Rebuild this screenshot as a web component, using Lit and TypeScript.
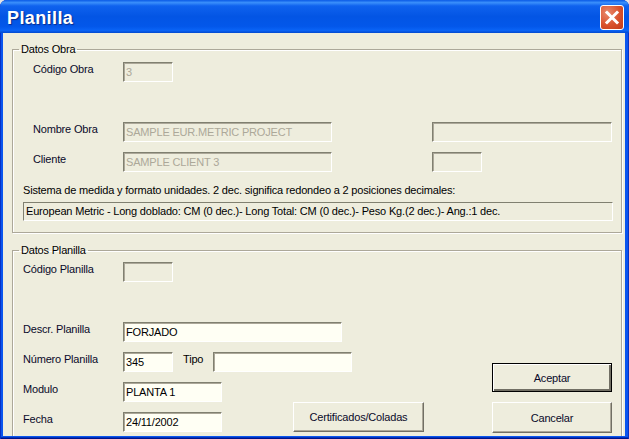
import { LitElement, html, css } from "lit";
import { customElement } from "lit/decorators.js";

@customElement("app-root")
export class AppRoot extends LitElement {
  static styles = css`
    :host { display: block; width: 629px; height: 439px; overflow: hidden; background: #e4e4e4;
      font-family: "Liberation Sans", Arial, sans-serif; font-size: 11px; letter-spacing: -0.18px; color: #000; }
    .window { display: flex; flex-direction: column; width: 629px; height: 439px; box-sizing: border-box;
      border-radius: 7px 7px 0 0; overflow: hidden;
      background: #0a55ee;
      box-shadow: inset 1px 0 0 #0831c4, inset -1px 0 0 #0831c4, inset 0 -1px 0 #00138c, inset 0 -2px 0 #0033bb; }
    .title { flex: none; height: 33px; box-sizing: border-box; padding: 2px 5px 0 7px; display: flex; align-items: center; justify-content: space-between;
      background: linear-gradient(180deg, #0a5ae6 0%, #3a8ffb 8%, #0f62ee 18%, #0355e4 50%, #0357ea 80%, #0a64f6 92%, #0249cf 100%); }
    .title-text { font-family: "Liberation Sans", sans-serif; font-weight: bold; font-size: 18px; letter-spacing: 0.4px; color: #fff;
      text-shadow: 1px 1px 1px #0a2c8c; margin-top: 2px; }
    .close { width: 24px; height: 25px; box-sizing: border-box; border: 1px solid #fff; border-radius: 3px; display: block;
      background: radial-gradient(circle at 30% 30%, #e88a6e, #d9512c 55%, #c23a18); }
    .client { flex: 1; min-height: 0; margin: 0 4px 3px 3px; background: #eeeddd; overflow: hidden; }
    fieldset { margin: 0; min-width: 0; border: 1px solid #aca899; box-shadow: 1px 1px 0 #fff, inset 1px 1px 0 #fff; padding: 0 0 0 10px; }
    legend { padding: 0 2px; margin-left: -4px; height: 14px; line-height: 14px; color: #000; }
    .g1 { margin: 9px 3px 0 9px; height: 191px; box-sizing: border-box; padding-top: 6px; }
    .g2 { margin: 10px 3px 0 9px; height: 210px; box-sizing: border-box; padding-top: 5px; }
    .row { display: flex; align-items: flex-start; height: 20px; }
    .gap40 { margin-top: 40px; }
    .gap10 { margin-top: 10px; }
    .label { width: 100px; flex: none; line-height: 14px; box-sizing: border-box; color: #0a0a2a; }
    .ind { padding-left: 10px; }
    .field { box-sizing: border-box; height: 20px; flex: none; padding: 0 2px; line-height: 19px; white-space: nowrap; overflow: hidden;
      border: 1px solid; border-color: #808070 #fff #fff #808070; box-shadow: inset 1px 1px 0 #aca899; }
    .off { background: #eeeddd; color: #aca899; }
    .on { background: #fffff4; color: #000; }
    .w50 { width: 50px; } .w99 { width: 99px; } .w209 { width: 209px; } .w219 { width: 219px; } .w180 { width: 180px; } .w139 { width: 139px; }
    .ml100 { margin-left: 100px; }
    .note { margin-top: 11px; height: 19px; line-height: 14px; }
    .box { width: 590px; height: 19px; box-sizing: border-box; padding: 0 2px; line-height: 17px; white-space: nowrap; overflow: hidden;
      border: 1px solid; border-color: #808070 #fff #fff #808070; }
    .tipo { margin-left: 10px; width: 30px; flex: none; line-height: 14px; }
    .lower { display: flex; }
    .left { width: 270px; flex: none; }
    .mid { width: 131px; flex: none; padding-top: 140px; }
    .right { width: 120px; flex: none; margin-left: 68px; padding-top: 101px; display: flex; flex-direction: column; gap: 10px; }
    .btn { box-sizing: border-box; display: flex; align-items: center; justify-content: center; color: #0a0a2a; background: #eeeddd;
      border: 1px solid; border-color: #fff #716f64 #716f64 #fff; box-shadow: inset -1px -1px 0 #aca899; }
    .b1 { height: 30px; }
    .b2 { height: 29px; border: 1px solid #000; box-shadow: inset 1px 1px 0 #fff, inset -2px -2px 0 #716f64; }
    .b3 { height: 31px; }
  `;

  render() {
    return html`
      <div class="window">
        <div class="title">
          <span class="title-text">Planilla</span>
          <svg class="close" viewBox="0 0 22 23">
            <path d="M6 6.5 L16 16.5 M16 6.5 L6 16.5" stroke="#fff" stroke-width="3" stroke-linecap="square" fill="none"/>
          </svg>
        </div>
        <div class="client">
          <fieldset class="g1">
            <legend>Datos Obra</legend>
            <div class="row">
              <div class="label ind">Código Obra</div>
              <div class="field off w50">3</div>
            </div>
            <div class="row gap40">
              <div class="label ind">Nombre Obra</div>
              <div class="field off w209">SAMPLE EUR.METRIC PROJECT</div>
              <div class="field off w180 ml100"></div>
            </div>
            <div class="row gap10">
              <div class="label ind">Cliente</div>
              <div class="field off w209">SAMPLE CLIENT 3</div>
              <div class="field off w50 ml100"></div>
            </div>
            <div class="note">Sistema de medida y formato unidades. 2 dec. significa redondeo a 2 posiciones decimales:</div>
            <div class="box">European Metric - Long doblado: CM (0 dec.)- Long Total: CM (0 dec.)- Peso Kg.(2 dec.)- Ang.:1 dec.</div>
          </fieldset>
          <fieldset class="g2">
            <legend>Datos Planilla</legend>
            <div class="lower">
              <div class="left">
                <div class="row">
                  <div class="label">Código Planilla</div>
                  <div class="field off w50"></div>
                </div>
                <div class="row gap40">
                  <div class="label">Descr. Planilla</div>
                  <div class="field on w219">FORJADO</div>
                </div>
                <div class="row gap10">
                  <div class="label">Número Planilla</div>
                  <div class="field on w50">345</div>
                  <div class="tipo">Tipo</div>
                  <div class="field on w139"></div>
                </div>
                <div class="row gap10">
                  <div class="label">Modulo</div>
                  <div class="field on w99">PLANTA 1</div>
                </div>
                <div class="row gap10">
                  <div class="label">Fecha</div>
                  <div class="field on w99">24/11/2002</div>
                </div>
              </div>
              <div class="mid"><div class="btn b1">Certificados/Coladas</div></div>
              <div class="right">
                <div class="btn b2">Aceptar</div>
                <div class="btn b3">Cancelar</div>
              </div>
            </div>
          </fieldset>
        </div>
      </div>
    `;
  }
}
